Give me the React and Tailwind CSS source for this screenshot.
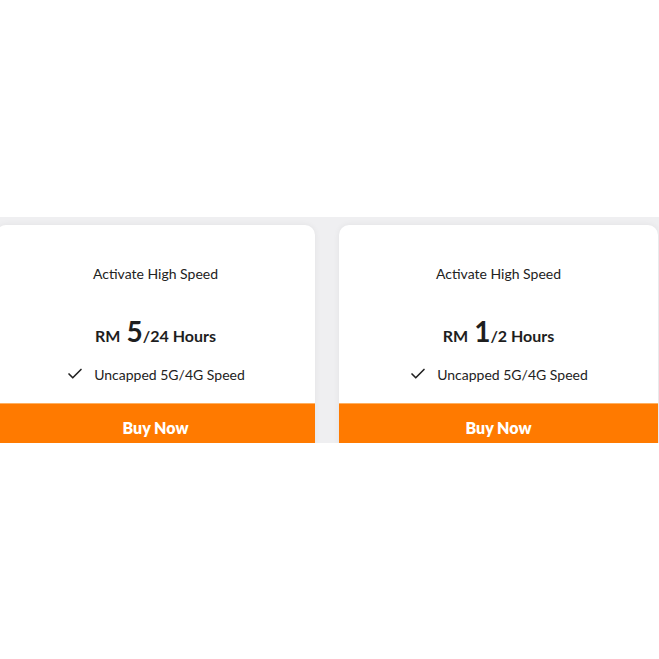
import React from 'react';
import { Check } from 'lucide-react';

const plans = [
  { price: '5', period: '/24 Hours' },
  { price: '1', period: '/2 Hours' },
];

const PlanCard = ({ price, period }) => (
  <div className="w-[319px] h-[240px] shrink-0 bg-white rounded-[10px] shadow-[0_0_6px_rgba(0,0,0,0.06)] overflow-hidden flex flex-col items-center">
    <p className="pt-[39px] text-[14px] leading-5 text-[#222]">Activate High Speed</p>
    <p className="mt-[31px] h-8 flex items-baseline text-[#1e1e1e] font-bold">
      <span className="text-[16px]">RM</span>
      <span className="ml-[6px] text-[28px] leading-8">{price}</span>
      <span className="text-[16px]">{period}</span>
    </p>
    <div className="mt-[17px] h-5 flex items-center gap-[10px] text-[14px] text-[#222]">
      <Check className="w-[18px] h-[18px]" strokeWidth={2.2} />
      <span>Uncapped 5G/4G Speed</span>
    </div>
    <button className="mt-[19px] w-full h-12 shrink-0 bg-[#ff7a00] border-t border-[#ffb060] text-white text-[16px] font-extrabold">
      Buy Now
    </button>
  </div>
);

const App = () => {
  return (
    <div className="min-h-screen bg-white font-['Lato','Liberation_Sans',sans-serif]">
      <div className="h-[217px]" />
      <div className="h-[226px] bg-[#efeff1] overflow-hidden">
        <div className="flex gap-6 ml-[-4px] pt-2">
          {plans.map((plan, i) => (
            <PlanCard key={i} {...plan} />
          ))}
        </div>
      </div>
    </div>
  );
};

export default App;
